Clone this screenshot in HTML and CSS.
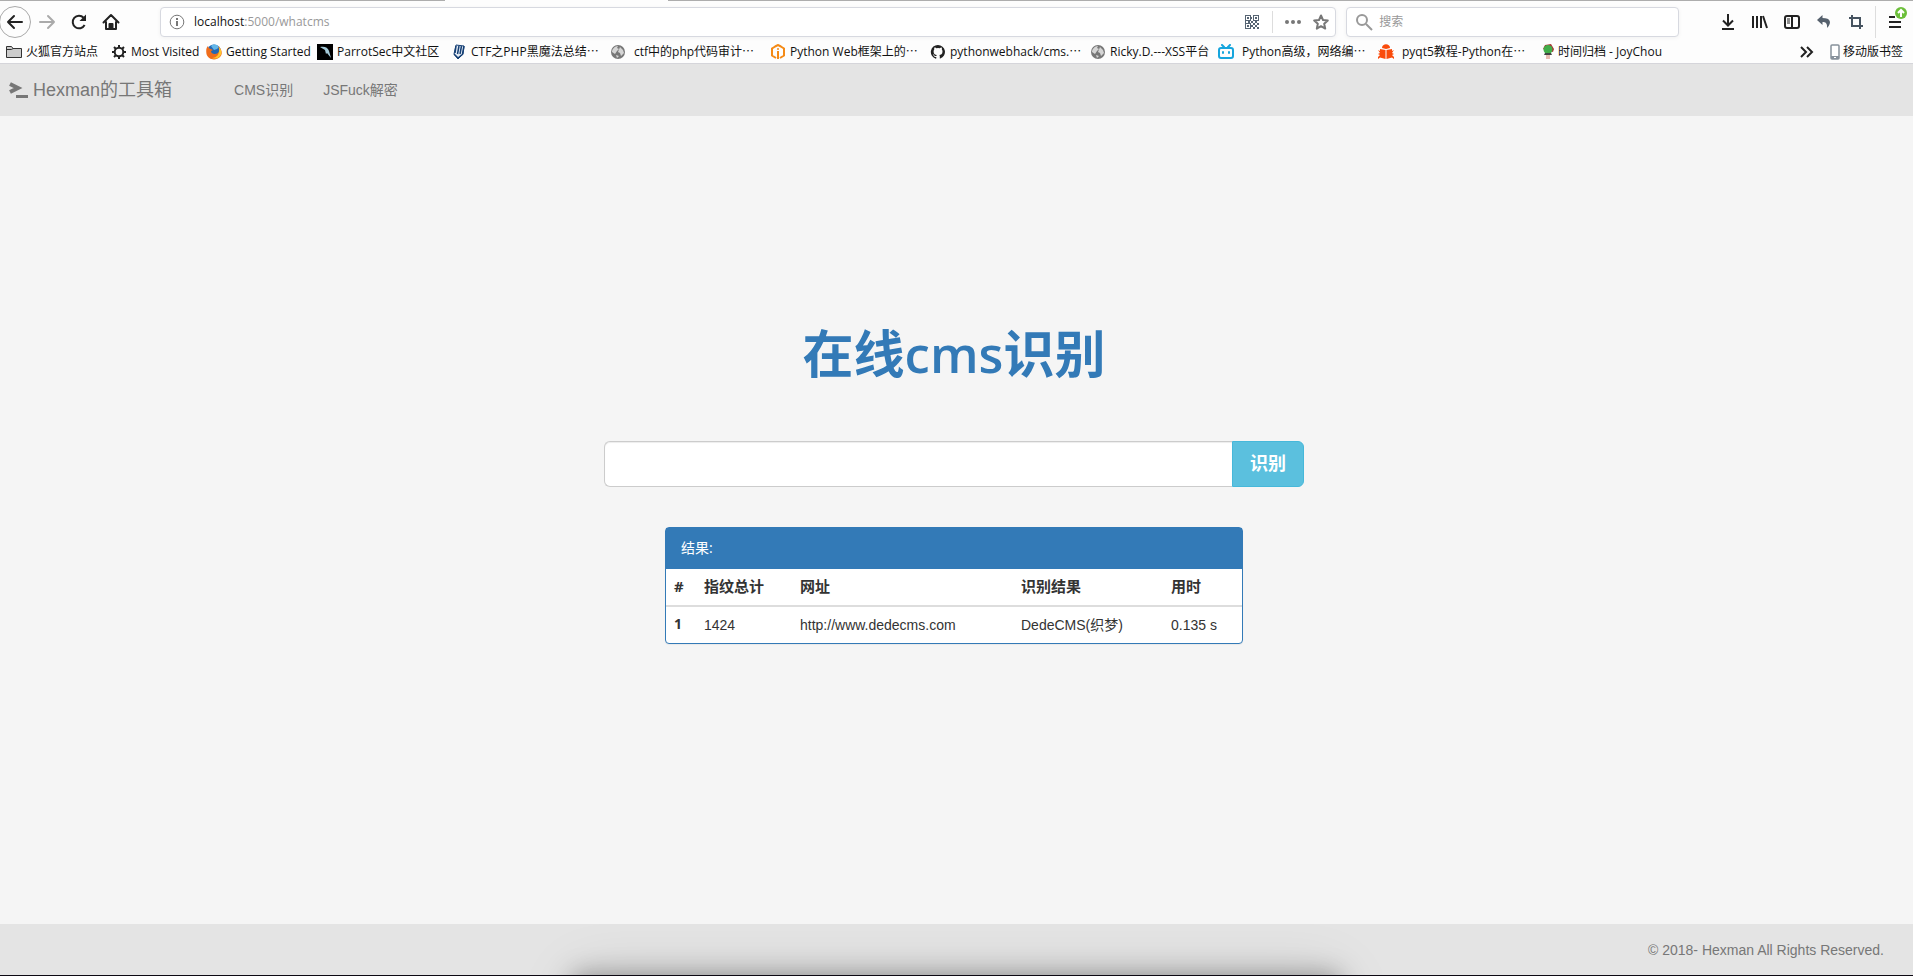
FILE: index.html
```html
<!DOCTYPE html>
<html lang="zh-CN">
<head>
<meta charset="utf-8">
<title>在线cms识别</title>
<link rel="stylesheet" href="styles.css">
</head>
<body>
<header class="browser">
  <div class="tabstrip"><span class="tab-edge"></span><span></span><span class="tab-edge"></span></div>
  <div class="toolbar">
    <div class="nav-buttons">
      <button class="tool back" aria-label="后退"><svg width="18" height="18" viewBox="0 0 18 18" fill="none" stroke="#222" stroke-width="2" stroke-linecap="round" stroke-linejoin="round"><path d="M16 9H2M8 3L2 9l6 6"/></svg></button>
      <button class="tool" aria-label="前进"><svg width="18" height="18" viewBox="0 0 18 18" fill="none" stroke="#aaa" stroke-width="2" stroke-linecap="round" stroke-linejoin="round"><path d="M2 9h14M10 3l6 6-6 6"/></svg></button>
      <button class="tool" aria-label="刷新"><svg width="18" height="18" viewBox="0 0 18 18" fill="none" stroke="#222" stroke-width="2"><path d="M14.6 12A6.3 6.3 0 1 1 13.6 4.7"/><path d="M16 1.500V8H9.500z" fill="#222" stroke="none"/></svg></button>
      <button class="tool" aria-label="主页"><svg width="18" height="18" viewBox="0 0 18 18" fill="none" stroke="#222" stroke-width="2" stroke-linejoin="round" stroke-linecap="round"><path d="M1.500 9.500L9 2l7.500 7.500M4 9v7h10V9"/><path d="M7.500 16v-5h3v5" fill="#222"/></svg></button>
    </div>
    <div class="field urlbar">
      <svg class="info" width="16" height="16" viewBox="0 0 16 16" fill="none" stroke="#777"><circle cx="8" cy="8" r="6.8"/><path d="M8 7v5M8 4v2" stroke-width="2"/></svg>
      <div class="url" role="textbox" aria-label="地址" contenteditable="true">localhost<span class="path">:5000/whatcms</span></div>
      <button class="tool small" aria-label="二维码"><svg width="14" height="14" viewBox="0 0 14 14" fill="#566473"><path d="M0 0h6v6H0zM1 1v4h4V1zM8 0h6v6H8zM9 1v4h4V1zM0 8h6v6H0zM1 9v4h4V9z" fill-rule="evenodd"/><path d="M2 2h2v2H2zM10 2h2v2h-2zM2 10h2v2H2zM6 6h2v2H6zM0 6h1v2H0zM3 6h2v2H3zM10 6h2v2h-2zM8 8h2v2H8zM12 8h2v2h-2zM6 10h2v2H6zM10 10h2v2h-2zM8 12h2v2H8zM12 12h2v2h-2zM6 2h1v2H6z"/></svg></button>
      <span class="rule"></span>
      <button class="tool small" aria-label="页面操作"><svg width="18" height="6" viewBox="0 0 18 6" fill="#777"><circle cx="3" cy="3" r="2"/><circle cx="9" cy="3" r="2"/><circle cx="15" cy="3" r="2"/></svg></button>
      <button class="tool small" aria-label="收藏"><svg width="16" height="16" viewBox="0 0 16 16" fill="none" stroke="#777" stroke-width="2" stroke-linejoin="round"><path d="M8 1.500l2 4.500 4.800.5-3.600 3.300 1 4.800L8 12.200l-4.200 2.400 1-4.800L1.200 6.500 6 6z"/></svg></button>
    </div>
    <div class="field search">
      <svg width="18" height="18" viewBox="0 0 18 18" fill="none" stroke="#999" stroke-width="2"><circle cx="7" cy="7" r="5"/><path d="M11 11l6 6"/></svg>
      <input class="search-input" type="search" placeholder="搜索" aria-label="搜索">
    </div>
    <div class="tools">
      <button class="tool" aria-label="下载"><svg width="16" height="18" viewBox="0 0 16 18" fill="none" stroke="#222" stroke-width="2"><path d="M8 1v11M3 7.500l5 5 5-5M2 16h12"/></svg></button>
      <button class="tool" aria-label="书库"><svg width="18" height="16" viewBox="0 0 18 16" fill="none" stroke="#222" stroke-width="2"><path d="M2 2v12M6 2v12M10 2v12M12 2l4 12"/></svg></button>
      <button class="tool" aria-label="侧栏"><svg width="18" height="16" viewBox="0 0 18 16" fill="none" stroke="#222" stroke-width="2"><rect x="2" y="2" width="14" height="12" rx="2"/><path d="M9 2v12"/><path d="M4 5h3M4 7h3M4 9h3" stroke-width="1"/></svg></button>
      <button class="tool" aria-label="撤销"><svg width="16" height="16" viewBox="0 0 16 16" fill="#56616d"><path d="M6.500 1L1 6l5.500 5V8c3 0 5 1 4.500 6 5-5 4-10-4.500-10z"/></svg></button>
      <button class="tool" aria-label="截图"><svg width="16" height="16" viewBox="0 0 16 16" fill="none" stroke="#465360" stroke-width="2"><path d="M4 1v11h11M1 4h11v11"/></svg></button>
      <span class="rule tall"></span>
      <button class="tool menu" aria-label="菜单"><svg width="16" height="16" viewBox="0 0 16 16" stroke="#222" stroke-width="2"><path d="M2 3h6M2 8h12M2 13h12"/></svg><svg class="badge" width="12" height="12" viewBox="0 0 12 12"><circle cx="6" cy="6" r="6" fill="#6cbf3a"/><path d="M6 10V3M3 6l3-3 3 3" fill="none" stroke="#fff" stroke-width="2"/></svg></button>
    </div>
  </div>
  <nav class="bookmarks" aria-label="书签">
    <a href="#"><svg width="16" height="16" viewBox="0 0 16 16" fill="#ccc" stroke="#333"><path d="M.5 13.500v-11h5l1.500 2h8.500v9z"/><path d="M.5 5.500h5l1.500-1"/></svg>火狐官方站点</a>
    <a href="#"><svg width="16" height="16" viewBox="0 0 16 16" fill="none" stroke="#222"><circle cx="8" cy="8" r="4.300" stroke-width="2"/><path d="M8 1v2.500M8 12.500V15M1 8h2.500M12.500 8H15M3 3l2 2M11 11l2 2M13 3l-2 2M5 11l-2 2" stroke-width="2"/></svg>Most Visited</a>
    <a href="#"><svg width="16" height="16" viewBox="0 0 16 16"><circle cx="8" cy="7.500" r="7" fill="#2468b4"/><path d="M5 2c2-2 6-2 8 1l-2 2-3 1z" fill="#62b6e8"/><path d="M2 2c0 1 .5 2 1.500 2.500L7 6 5 7c0 3 4 4 7 2 2-2 1-5 0-7 4 3 5 8 2 11-4 4-12 3-13.500-3C0 7 0 4 2 2z" fill="#ef6c1a"/><path d="M13 3c3 3 3 7 1 9-2 3-6 3-8 2 5 0 8-4 7-11z" fill="#ffc52d"/></svg>Getting Started</a>
    <a href="#"><svg width="16" height="16" viewBox="0 0 16 16"><path d="M0 0h16v16H0z"/><path d="M3 3c4-1 8 0 9 4l2 7-4-5-1 1-1-4z" fill="#a5cbd9"/></svg>ParrotSec中文社区</a>
    <a href="#"><svg width="16" height="16" viewBox="0 0 16 16" fill="none" stroke="#164075"><path d="M5 1l8 1-1 8-5 5-4-5z" fill="#e6edf6"/><path d="M5 2L4 9M8 2L6.500 10M10.500 2L9 10M13 2l-1.500 8M3 10l4 4 5-4" stroke-width="1.500"/></svg>CTF之PHP黑魔法总结⋯</a>
    <a href="#" class="wide"><svg width="16" height="16" viewBox="0 0 16 16"><circle cx="8" cy="8" r="7" fill="#777"/><path d="M2 8c0-3 3-6 6-6l-1 2 2 1-2 2-2 3zM10 3l3 3 1 3-3 3-1-3-2-1zM6 11l3 1-2 2z" fill="#d5d5d5"/></svg>ctf中的php代码审计⋯</a>
    <a href="#"><svg width="16" height="16" viewBox="0 0 16 16" fill="none" stroke="#f48a16" stroke-width="2"><path d="M6 14l-4-2.500v-7L6 2M10 2l4 2.500v7L10 14M8 7v8M5 2.500L8 1l3 1.500"/><circle cx="8" cy="5" r="1" fill="#f48a16" stroke="none"/></svg>Python Web框架上的⋯</a>
    <a href="#"><svg width="16" height="16" viewBox="0 0 16 16"><path fill="#222" d="M8 1a7 7 0 0 0-2.200 13.700c.4 0 .5-.2.500-.4v-1.400c-2 .4-2.400-.9-2.400-.9-.3-.8-.8-1-.8-1-.6-.5.1-.4.1-.4.700 0 1 .7 1 .7.700 1.100 1.700.8 2.100.6.1-.5.300-.8.500-1-1.600-.2-3.200-.8-3.200-3.500 0-.8.300-1.400.7-1.900-.1-.2-.3-.9.100-1.900 0 0 .6-.2 1.900.7a7 7 0 0 1 3.500 0c1.300-.9 1.900-.7 1.900-.7.400 1 .2 1.700.1 1.900.4.500.7 1.100.7 1.900 0 2.700-1.600 3.300-3.200 3.500.3.200.5.600.5 1.300v2c0 .2.100.5.500.4A7 7 0 0 0 8 1z"/></svg>pythonwebhack/cms.⋯</a>
    <a href="#"><svg width="16" height="16" viewBox="0 0 16 16"><circle cx="8" cy="8" r="7" fill="#777"/><path d="M2 8c0-3 3-6 6-6l-1 2 2 1-2 2-2 3zM10 3l3 3 1 3-3 3-1-3-2-1zM6 11l3 1-2 2z" fill="#d5d5d5"/></svg>Ricky.D.---XSS平台</a>
    <a href="#" class="wide"><svg width="16" height="16" viewBox="0 0 16 16" fill="none" stroke="#16a5dd" stroke-width="2" stroke-linecap="round"><rect x="1" y="4" width="14" height="10" rx="2"/><path d="M4 1l2 2M12 1l-2 2M5 8v1M11 8v1"/></svg>Python高级，网络编⋯</a>
    <a href="#" class="wide"><svg width="16" height="16" viewBox="0 0 16 16" fill="#fa4b0b"><path d="M4 4c0-5 8-5 8 0l-4 1z"/><path d="M0 6l2 1V5l5.500 1v9L2 13.500 0 15v-2l2-2-2-1 2-1zM16 6l-2 1V5L8.500 6v9l5.500-1.500 2 1.500v-2l-2-2 2-1-2-1z"/></svg>pyqt5教程-Python在⋯</a>
    <a href="#"><svg width="12" height="16" viewBox="0 0 12 16"><path d="M1 5l2-4 6-1 3 5-1 3z" fill="#a93435"/><circle cx="6" cy="5.500" r="4.500" fill="#42ad49"/><path d="M3 9h6l1 2H2z" fill="#444"/><path d="M4 11h4v4H4z" fill="#e8bbb2"/></svg>时间归档 - JoyChou</a>
    <button class="tool more" aria-label="更多书签"><svg width="14" height="14" viewBox="0 0 14 14" fill="none" stroke="#222" stroke-width="2"><path d="M1 2l5 5-5 5M7 2l5 5-5 5"/></svg></button>
    <a href="#" class="mobile"><svg width="10" height="16" viewBox="0 0 10 16"><rect x="1" y="1" width="8" height="14" rx="1" fill="#fff" stroke="#87919b" stroke-width="1.500"/><path d="M1 12h8v3H1z" fill="#87919b"/><path d="M4 13h2v1H4z" fill="#fff"/></svg>移动版书签</a>
  </nav>
</header>
<nav class="navbar">
  <a class="brand" href="#"><svg width="20" height="18" viewBox="0 0 20 18" fill="none" stroke="#777" stroke-width="4"><path d="M1 3l8 4-8 4"/><path d="M7 15.500h12" stroke-width="3"/></svg>Hexman的工具箱</a>
  <a class="nav-link" href="#">CMS识别</a>
  <a class="nav-link" href="#">JSFuck解密</a>
</nav>
<main class="content">
  <h1 class="title">在线cms识别</h1>
  <form class="query">
    <input class="query-input" type="text" aria-label="网址">
    <button class="query-button" type="button">识别</button>
  </form>
  <section class="panel">
    <h2 class="panel-heading">结果:</h2>
    <table class="results">
      <colgroup><col class="col-no"><col class="col-count"><col class="col-url"><col class="col-result"><col></colgroup>
      <thead><tr><th>#</th><th>指纹总计</th><th>网址</th><th>识别结果</th><th>用时</th></tr></thead>
      <tbody><tr><th scope="row">1</th><td>1424</td><td>http://www.dedecms.com</td><td>DedeCMS(织梦)</td><td>0.135 s</td></tr></tbody>
    </table>
  </section>
</main>
<footer class="footer">© 2018- Hexman All Rights Reserved.</footer>
</body>
</html>
```
FILE: styles.css
```css
* { box-sizing: border-box; }
body {
  margin: 0;
  min-height: 100vh;
  display: flex;
  flex-direction: column;
  background: #f5f5f5;
  color: #333;
  font: 14px/20px "Liberation Sans", "Noto Sans CJK SC", sans-serif;
}
a { color: inherit; text-decoration: none; }
button, input { font: inherit; }
svg { display: block; flex: none; }

.browser {
  background: #fdfdfd;
  border-bottom: 1px solid #d5d5da;
  color: #111;
  font: 12px/16px "Open Sans", "Noto Sans CJK SC", sans-serif;
}
.tabstrip { display: grid; grid-template-columns: 445px 223px 1fr; height: 1px; }
.tab-edge { background: #adadad; }
.toolbar { display: flex; align-items: center; height: 42px; }
.tool {
  display: flex;
  align-items: center;
  justify-content: center;
  width: 32px;
  height: 32px;
  padding: 0;
  border: 0;
  background: none;
  flex: none;
}
.nav-buttons { display: flex; width: 160px; }
.back { border: 1px solid #aaa; border-radius: 50%; margin-left: -1px; }
.field {
  display: flex;
  align-items: center;
  height: 30px;
  background: #fff;
  border: 1px solid #d7d9e0;
  border-radius: 4px;
  box-shadow: 0 1px 4px rgba(0, 0, 0, .05);
}
.urlbar { flex: 1163 1 0; padding: 0 0 0 8px; }
.url { flex: 1; margin-left: 9px; outline: 0; }
.path { color: #999; }
.small { width: 28px; height: 28px; }
.rule { width: 1px; height: 22px; margin: 0 6px; background: #ddd; }
.tall { height: 32px; margin: 0 3px; }
.search { flex: 314 1 0; margin-left: 10px; padding: 0 8px; gap: 6px; }
.search-input { flex: 1; min-width: 0; border: 0; outline: 0; padding: 0; background: none; }
.search-input::placeholder { color: #999; }
.tools { display: flex; align-items: center; width: 234px; padding-left: 33px; }
.menu { position: relative; }
.badge { position: absolute; right: 4px; top: 1px; }

.bookmarks {
  display: grid;
  grid-template-columns: 105px 95px 111px 134px 159px 160px 160px 160px 128px 160px 164px 1fr auto auto;
  align-items: center;
  height: 20px;
  padding: 0 10px 2px 6px;
  white-space: nowrap;
}
.bookmarks a { display: flex; align-items: center; gap: 4px; }
.bookmarks .wide { gap: 8px; }
.bookmarks .mobile { gap: 3px; }
.more { height: 16px; width: 30px; margin-right: 8px; }

.navbar {
  display: flex;
  align-items: center;
  height: 52px;
  padding-left: 9px;
  background: #e4e4e4;
  color: #777;
}
.brand { display: flex; align-items: center; gap: 4px; font-size: 18px; margin-right: 62px; }
.nav-link { margin-right: 30px; }

.content {
  flex: 1;
  display: flex;
  flex-direction: column;
  align-items: center;
  padding: 203px 5px 40px 0;
}
.title {
  margin: 0;
  color: #337ab7;
  font: 600 51px/68px "Open Sans", "Noto Sans CJK SC", sans-serif;
}
.query { display: flex; width: 700px; max-width: 100%; height: 46px; margin-top: 54px; }
.query-input {
  flex: 1;
  min-width: 0;
  padding: 10px 16px;
  font-size: 18px;
  background: #fff;
  border: 1px solid #ccc;
  border-right: 0;
  border-radius: 6px 0 0 6px;
  box-shadow: inset 0 1px 1px rgba(0, 0, 0, .075);
}
.query-button {
  width: 72px;
  padding: 0;
  color: #fff;
  font-size: 18px;
  font-weight: bold;
  background: #5bc0de;
  border: 1px solid #46b8da;
  border-radius: 0 6px 6px 0;
}
.panel {
  width: 578px;
  max-width: 100%;
  margin-top: 40px;
  background: #fff;
  border: 1px solid #337ab7;
  border-radius: 4px;
  box-shadow: 0 1px 1px rgba(0, 0, 0, .05);
}
.panel-heading {
  margin: 0;
  padding: 9px 15px 11px;
  color: #fff;
  font: 14px/21px "Open Sans", "Noto Sans CJK SC", sans-serif;
  background: #337ab7;
}
.results { width: 100%; table-layout: fixed; border-collapse: collapse; }
.results th, .results td { padding: 8px; text-align: left; vertical-align: top; }
.results th { padding: 7px 8px 9px; font: bold 14px/20px "Open Sans", "Noto Sans CJK SC", sans-serif; }
.results thead th { font-size: 15px; border-bottom: 2px solid #ddd; }
.col-no { width: 30px; }
.col-count { width: 96px; }
.col-url { width: 221px; }
.col-result { width: 150px; }

.footer {
  position: relative;
  overflow: hidden;
  height: 52px;
  padding: 16px 29px 15px;
  text-align: right;
  color: #777;
  border-bottom: 1px solid #0c0812;
  background: #e4e4e4;
}
.footer::after {
  content: "";
  position: absolute;
  top: 100%;
  left: 30%;
  right: 30%;
  height: 60px;
  box-shadow: 0 0 26px rgba(0, 0, 0, .35), 0 0 60px rgba(0, 0, 0, .12);
}
```
